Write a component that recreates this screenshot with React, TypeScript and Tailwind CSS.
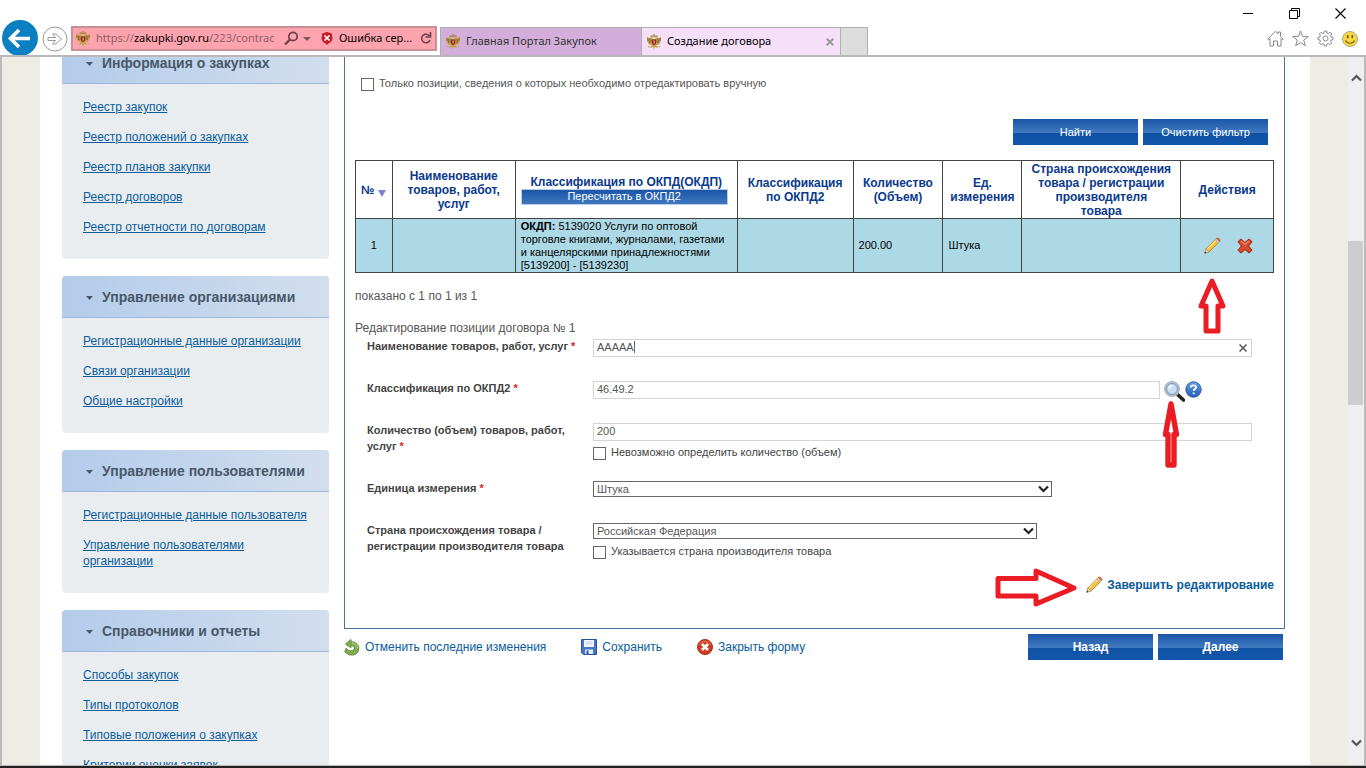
import React from "react";

const sections = [
	{
		title: "Информация о закупках",
		links: ["Реестр закупок", "Реестр положений о закупках", "Реестр планов закупки", "Реестр договоров", "Реестр отчетности по договорам"],
	},
	{
		title: "Управление организациями",
		links: ["Регистрационные данные организации", "Связи организации", "Общие настройки"],
	},
	{
		title: "Управление пользователями",
		links: ["Регистрационные данные пользователя", "Управление пользователями организации"],
	},
	{
		title: "Справочники и отчеты",
		links: ["Способы закупок", "Типы протоколов", "Типовые положения о закупках", "Критерии оценки заявок"],
	},
];

const Eagle: React.FC = () => (
	<svg width="16" height="16" viewBox="0 0 16 16" className="shrink-0">
		<path d="M7 5 5.6 3.2 3 4 1.2 2.6 1 6l1 3 1.6 1.8L6 11l-2.4 2.6 1.8.2 1.6-1.3L8 15.5l1-3 1.6 1.3 1.8-.2L10 11l2.4-.2L14 9l1-3-.2-3.4L13 4l-2.6-.8L9 5z" fill="#c0a04a" />
		<path d="M2 4v3M3.6 5v4M5 5v4M14 4v3M12.4 5v4M11 5v4" stroke="#6b5c28" strokeWidth=".7" />
		<path d="M4.2 2.4 6 1.6 7 3.4M11.8 2.4 10 1.6 9 3.4M7 1.3 8 .5l1 .8-.4 1.2H7.4z" fill="#d2a83a" stroke="#86702e" strokeWidth=".6" />
		<path d="M6 5.5h4v4L8 11.2 6 9.5z" fill="#a51d1d" />
		<path d="M7.600 6.500h1v3h-1z" fill="#e9cfa0" />
		<circle cx="2.600" cy="12.600" r=".9" fill="#c9b25a" />
		<circle cx="13.300" cy="12.600" r=".9" fill="#c9b25a" />
	</svg>
);

const Pencil: React.FC = () => (
	<svg width="17" height="17" viewBox="0 0 17 17">
		<path d="m.8 16.200 1.200-4.400L11.500 2.200l3.300 3.200-9.600 9.400z" fill="#f3bd3e" stroke="#a67822" strokeWidth=".8" />
		<path d="M3.200 12 12 3.200" stroke="#fbe08a" strokeWidth="1.300" />
		<path d="m.8 16.200 1.200-4.400 3.200 3z" fill="#f3dfc0" stroke="#a98a5c" strokeWidth=".7" />
		<path d="m.6 16.400.5-1.900 1.400 1.400z" fill="#333" />
		<path d="m11 2.800 1.300-1.300 3.300 3.200L14.300 6z" fill="#d7d7d7" stroke="#9a9a9a" strokeWidth=".5" />
		<path d="M12.300 1.500c1.600-1.700 5 1.300 3.300 3.200z" fill="#dd6a42" stroke="#b75233" strokeWidth=".6" />
	</svg>
);

const Chevron: React.FC<{ className?: string }> = ({ className }) => (
	<svg width="11" height="8" viewBox="0 0 11 8" className={className} fill="none">
		<path d="m1 1.500 4.500 4.500L10 1.500" stroke="currentColor" strokeWidth="2.200" />
	</svg>
);

const BlueButton: React.FC<{ label: string; size?: string }> = ({ label, size = "text-[12px] font-bold" }) => (
	<button
		type="button"
		className={`h-[26px] w-[125px] bg-[linear-gradient(#1a55a7_0%,#4079bf_52%,#0f52a5_53%,#1256ab_100%)] text-white ${size}`}
	>
		{label}
	</button>
);

const CheckField: React.FC<{ id: string; label: string }> = ({ id, label }) => (
	<div className="flex items-start gap-[5px] text-[11px]">
		<input id={id} type="checkbox" className="size-[13px] shrink-0 appearance-none border border-[#666] bg-white checked:bg-[#666]" />
		<label htmlFor={id} className="leading-[10px]">{label}</label>
	</div>
);

const FormRow: React.FC<{ id: string; label: string; required?: boolean; tall?: boolean; children: React.ReactNode }> = ({ id, label, required, tall, children }) => (
	<div className={`flex ${tall ? "min-h-[58px]" : "min-h-[42px]"}`}>
		<label htmlFor={id} className="w-[226px] shrink-0 pr-3 text-[11px] leading-4 font-bold text-[#444]">
			{label} {required && <span className="text-[#d22]">*</span>}
		</label>
		<div className="min-w-0 flex-1 pt-px">{children}</div>
	</div>
);

const SelectField: React.FC<{ id: string; value: string; width: string }> = ({ id, value, width }) => (
	<div className={`relative max-w-full ${width}`}>
		<select id={id} className="block h-4 w-full appearance-none border border-[#666] bg-white px-[3px] text-[11px] leading-[14px] text-[#555]">
			<option>{value}</option>
		</select>
		<Chevron className="pointer-events-none absolute top-1 right-[3px] text-[#222]" />
	</div>
);

const textInput = "block h-[18px] w-full border border-[#d4d4d4] bg-white px-[3px] pb-[3px] text-[11px] text-[#555] outline-none";

const BrowserBar: React.FC = () => (
	<header className="flex h-[57px] shrink-0 items-end justify-between border-b-2 border-[#b9b9b9] bg-white font-['Noto_Sans',sans-serif] text-[11px]">
		<div className="flex items-end">
			<button type="button" aria-label="Назад" className="ml-0.5">
				<svg width="38" height="35" viewBox="0 0 38 35">
					<circle cx="18" cy="18" r="18" fill="#0a80c2" />
					<path d="M28 18.500H9.500M17 10l-8.500 8.500L17 27" fill="none" stroke="#fff" strokeWidth="3.600" />
				</svg>
			</button>
			<button type="button" aria-label="Вперед" className="mb-[3px] ml-0.5">
				<svg width="26" height="26" viewBox="0 0 26 26" fill="none" stroke="#999">
					<circle cx="13" cy="13" r="12" />
					<path d="M6 11.500h7.500L10.500 8H14l5.500 5-5.500 5h-3.500l3-3.500H6z" />
				</svg>
			</button>
			<div className="mb-1 ml-[3px] flex h-[25px] w-[366px] items-center border-2 border-[#c98f96] bg-[#ffa3af] pl-0.5">
				<Eagle />
				<span className="ml-[5px] w-[186px] overflow-hidden whitespace-nowrap text-[#8a6267]">
					https://<span className="text-black">zakupki.gov.ru</span>/223/contrac
				</span>
				<svg width="15" height="15" viewBox="0 0 15 15" className="ml-0.5 shrink-0" fill="none" stroke="#6b4247" strokeWidth="1.800">
					<circle cx="9" cy="5.500" r="4.200" />
					<path d="m6 8.500-5 5" strokeWidth="2.400" />
				</svg>
				<svg width="8" height="4" viewBox="0 0 8 4" className="ml-1 shrink-0"><path d="M0 0h8L4 4z" fill="#7a5459" /></svg>
				<svg width="12" height="13" viewBox="0 0 12 13" className="ml-[10px] shrink-0">
					<path d="M1 1.500 6 0l5 1.500v6L6 13 1 7.500z" fill="#c61f2b" />
					<circle cx="6" cy="6" r="5.500" fill="#c61f2b" />
					<path d="m3.500 3.500 5 5m0-5-5 5" stroke="#fff" strokeWidth="1.700" />
				</svg>
				<span className="ml-1.5 whitespace-nowrap text-black">Ошибка сер...</span>
				<svg width="12" height="13" viewBox="0 0 12 13" className="mr-[3px] ml-auto shrink-0" fill="none" stroke="#6b4247" strokeWidth="1.600">
					<path d="M9.500 4A4.300 4.300 0 1 0 10 8" />
					<path d="M10.500 0v5h-5" />
				</svg>
			</div>
			<div className="ml-[3px] flex h-7 border border-[#b0b0b0] border-b-0">
				<div className="flex w-[200px] items-center gap-[5px] bg-[#d3aedb] pl-1 text-[#333]">
					<Eagle />Главная Портал Закупок
				</div>
				<div className="flex w-[200px] items-center gap-[5px] border-x border-[#b0b0b0] bg-[#f5dff9] pl-1 text-black">
					<Eagle />Создание договора
					<button type="button" aria-label="Закрыть вкладку" className="mr-1.5 ml-auto">
						<svg width="8" height="8" viewBox="0 0 8 8"><path d="m.7.7 6.600 6.600m0-6.600L.7 7.300" stroke="#999" strokeWidth="2" /></svg>
					</button>
				</div>
				<div className="w-[26px] bg-[#dcdcdc]" />
			</div>
		</div>
		<div className="flex h-[55px] flex-col items-end justify-between pt-2 pb-2">
			<div className="flex items-center gap-[35px] pr-5">
				<button type="button" aria-label="Свернуть">
					<svg width="11" height="11" viewBox="0 0 11 11"><path d="M0 5.500h10" stroke="#000" /></svg>
				</button>
				<button type="button" aria-label="Восстановить">
					<svg width="11" height="11" viewBox="0 0 11 11" fill="none" stroke="#000"><path d="M.5 2.500h8v8h-8zM2.500 2.500v-2h8v8h-2" /></svg>
				</button>
				<button type="button" aria-label="Закрыть">
					<svg width="11" height="11" viewBox="0 0 11 11"><path d="m.5.5 10 10m0-10-10 10" stroke="#000" strokeWidth="1.100" /></svg>
				</button>
			</div>
			<div className="flex items-center gap-2 pr-2">
				<svg width="17" height="17" viewBox="0 0 17 17" fill="none" stroke="#888">
					<path d="M.8 9.200 8.500 1.200l2.500 2.600V2h2.500v4.300l2.700 2.900-1 .8-1.200-1.200v7.200h-3.500v-5h-4v5H3V8.800L1.800 10z" />
				</svg>
				<svg width="17" height="17" viewBox="0 0 17 17" fill="none" stroke="#888">
					<path d="m8.500.9 2 5.400 5.800.2-4.600 3.600 1.600 5.600-4.800-3.200-4.800 3.200 1.600-5.600L.7 6.500l5.800-.2z" />
				</svg>
				<svg width="17" height="17" viewBox="0 0 17 17" fill="none" stroke="#888">
					<path d="M7.300 1h2.400l.4 2 1.200.5L13 2.300 14.700 4l-1.200 1.700.5 1.200 2 .4v2.400l-2 .4-.5 1.200 1.200 1.700-1.700 1.700-1.700-1.200-1.200.5-.4 2H7.300l-.4-2-1.200-.5L4 14.700 2.300 13l1.200-1.700-.5-1.200-2-.4V7.300l2-.4.5-1.200L2.300 4 4 2.300l1.700 1.200L6.900 3z" />
					<circle cx="8.500" cy="8.500" r="2.500" />
				</svg>
				<svg width="16" height="16" viewBox="0 0 16 16">
					<circle cx="8" cy="8" r="7.500" fill="#fbd63e" stroke="#a9a68c" />
					<path d="M5.700 4v3.200M10.300 4v3.200" stroke="#76601c" strokeWidth="1.700" />
					<path d="M3.500 9.500c1.500 3.600 7.500 3.600 9 0" fill="none" stroke="#76601c" strokeWidth="1.100" />
				</svg>
			</div>
		</div>
	</header>
);

const Sidebar: React.FC = () => (
	<nav className="-mt-[15px] flex w-[267px] shrink-0 flex-col gap-[17px]">
		{sections.map((s) => (
			<section key={s.title} className="overflow-hidden rounded-[4px] bg-[#e9edf0]">
				<h2 className="flex h-[42px] items-center gap-[9px] border-b border-[#9db8dc] bg-linear-to-r from-[#b3ccea] to-[#d2deee] pt-0.5 pl-6 text-[14px] font-bold text-[#48586a]">
					<svg width="7" height="4" viewBox="0 0 7 4"><path d="M0 0h7L3.500 4z" fill="#48586a" /></svg>
					{s.title}
				</h2>
				<ul className="flex flex-col gap-[14px] pt-[15px] pr-4 pb-6 pl-[21px] text-[12px] leading-4">
					{s.links.map((l) => (
						<li key={l}><a href="#" className="text-[#0a5c9c] underline">{l}</a></li>
					))}
				</ul>
			</section>
		))}
	</nav>
);

const cell = "border border-[#444] px-[5px] py-0";

const PositionsTable: React.FC = () => (
	<table className="mt-[15px] w-full table-fixed border-collapse border border-[#777]">
		<colgroup>
			<col className="w-[4%]" />
			<col className="w-[13.4%]" />
			<col className="w-[24.2%]" />
			<col className="w-[12.6%]" />
			<col className="w-[9.8%]" />
			<col className="w-[8.6%]" />
			<col className="w-[17.3%]" />
			<col />
		</colgroup>
		<thead>
			<tr className="h-[58px] text-[12px] leading-[14px] text-[#0a3a8c]">
				<th className={cell}>
					<span className="flex items-center gap-1">
						№
						<svg width="8" height="7" viewBox="0 0 8 7" className="mt-2"><path d="M0 0h8L4 7z" fill="#7f7fd6" /></svg>
					</span>
				</th>
				<th className={cell}>Наименование товаров, работ, услуг</th>
				<th className={cell}>
					<span className="block">Классификация по ОКПД(ОКДП)</span>
					<button type="button" className="block h-4 w-[98%] border border-[#b9cbe6] bg-linear-to-b from-[#1a55a7] to-[#3f77be] text-[11px] leading-[13px] font-normal text-white">
						Пересчитать в ОКПД2
					</button>
				</th>
				<th className={cell}>Классификация по ОКПД2</th>
				<th className={cell}>Количество (Объем)</th>
				<th className={cell}>Ед. измерения</th>
				<th className={cell}>
					Страна происхождения товара / регистрации производителя
					<br />
					товара
				</th>
				<th className={cell}>Действия</th>
			</tr>
		</thead>
		<tbody>
			<tr className="h-[54px] bg-[#add8e6] text-[11px] leading-[13px] text-black">
				<td className={`${cell} text-center`}>1</td>
				<td className={cell} />
				<td className={cell}>
					<b>ОКДП:</b> 5139020 Услуги по оптовой торговле книгами, журналами, газетами и канцелярскими принадлежностями [5139200] - [5139230]
				</td>
				<td className={cell} />
				<td className={cell}>200.00</td>
				<td className={cell}>Штука</td>
				<td className={cell} />
				<td className={cell}>
					<div className="flex items-center gap-4 pl-[18px]">
						<div className="relative">
							<button type="button" aria-label="Редактировать" className="block"><Pencil /></button>
							<svg width="32" height="58" viewBox="0 0 32 58" className="pointer-events-none absolute top-[40px] -left-2">
								<path d="M16 4 27 29h-5v25H10V29H5z" fill="#fff" stroke="#ea1c24" strokeWidth="5" strokeLinejoin="round" />
							</svg>
						</div>
						<button type="button" aria-label="Удалить">
							<svg width="16" height="16" viewBox="0 0 16 16">
								<path d="M4 1.200 8 4.600l4-3.400L14.900 4 11.500 8l3.400 4-2.900 2.800-4-3.400-4 3.400L1.100 12l3.400-4L1.100 4z" fill="#da4a2d" stroke="#ad2c1b" strokeWidth="1.100" strokeLinejoin="round" />
								<path d="M4 3 8 6.300 12 3" fill="none" stroke="#ef8a6b" strokeWidth="1.300" />
							</svg>
						</button>
					</div>
				</td>
			</tr>
		</tbody>
	</table>
);

const EditForm: React.FC = () => (
	<form className="mt-0.5 pr-[22px] pl-3 text-[#444]">
		<FormRow id="name" label="Наименование товаров, работ, услуг" required>
			<div className="relative">
				<input id="name" defaultValue="ААААА" className={textInput} />
				<span className="absolute top-0.5 left-[41px] h-3 w-px bg-[#666]" />
				<svg width="8" height="8" viewBox="0 0 8 8" className="absolute top-[5px] right-[5px]">
					<path d="m.5.5 7 7m0-7-7 7" stroke="#555" strokeWidth="1.500" />
				</svg>
			</div>
		</FormRow>
		<FormRow id="okpd" label="Классификация по ОКПД2" required>
			<div className="flex">
				<div className="w-[86%] shrink-0"><input id="okpd" defaultValue="46.49.2" className={textInput} /></div>
				<div className="relative ml-1">
					<button type="button" aria-label="Найти код" className="block">
						<svg width="21" height="21" viewBox="0 0 21 21">
							<path d="m13 13 6.500 6" stroke="#222" strokeWidth="3.600" strokeLinecap="round" />
							<circle cx="8" cy="8" r="7" fill="#c9def3" stroke="#b4bac2" strokeWidth="2" />
							<circle cx="8" cy="8" r="5.500" fill="none" stroke="#6f93bd" />
							<path d="M5 8c0-2 1.500-3.200 3.500-3.200" fill="none" stroke="#fff" strokeWidth="1.400" />
						</svg>
					</button>
					<svg width="20" height="70" viewBox="0 0 20 70" className="pointer-events-none absolute top-5 -left-[3px]">
						<path d="M10 3 15.500 33.500H13V64H7V33.500H4.500z" fill="#fff" stroke="#ea1c24" strokeWidth="5.400" strokeLinejoin="round" />
					</svg>
				</div>
				<button type="button" aria-label="Справка" className="mb-auto">
					<svg width="17" height="17" viewBox="0 0 17 17">
						<defs>
							<linearGradient id="help" x1="0" y1="0" x2="0" y2="1">
								<stop offset="0" stopColor="#6ea0e6" />
								<stop offset="1" stopColor="#1f5cb4" />
							</linearGradient>
						</defs>
						<circle cx="8.500" cy="8.500" r="7.700" fill="url(#help)" stroke="#2a5da8" />
						<path d="M6 6.600c0-3 5-3 5-.2 0 1.600-2.300 1.600-2.300 3.600M8.700 11.400v1.800" fill="none" stroke="#fff" strokeWidth="1.800" />
					</svg>
				</button>
			</div>
		</FormRow>
		<FormRow id="amount" label="Количество (объем) товаров, работ, услуг" required tall>
			<input id="amount" defaultValue="200" className={`${textInput} mb-1.5`} />
			<CheckField id="no-amount" label="Невозможно определить количество (объем)" />
		</FormRow>
		<FormRow id="unit" label="Единица измерения" required>
			<SelectField id="unit" value="Штука" width="w-[459px]" />
		</FormRow>
		<FormRow id="country" label="Страна происхождения товара / регистрации производителя товара">
			<div className="flex flex-col gap-[7px]">
				<SelectField id="country" value="Российская Федерация" width="w-[444px]" />
				<CheckField id="maker" label="Указывается страна производителя товара" />
			</div>
		</FormRow>
	</form>
);

const Scrollbar: React.FC = () => (
	<div className="flex w-4 shrink-0 flex-col items-center bg-[#efefef] pt-[17px] pb-[18px] text-[#555]">
		<Chevron className="rotate-180" />
		<div className="flex w-full flex-1 flex-col">
			<div className="grow-[159]" />
			<div className="w-[15px] grow-[164] bg-[#cdcdcd]" />
			<div className="grow-[335]" />
		</div>
		<Chevron />
	</div>
);

const App: React.FC = () => {
	return (
		<div className="flex h-screen flex-col overflow-hidden bg-white font-['Liberation_Sans',Arial,sans-serif]">
			<BrowserBar />
			<div className="flex min-h-0 flex-1 overflow-hidden border-x-2 border-b border-[#b9b9b9] bg-[#edede5]">
				<div className="ml-[38px] flex min-w-0 flex-1 items-start gap-[15px] overflow-hidden bg-white pr-[25px] pl-[22px]">
					<Sidebar />
					<main className="min-w-0 flex-1 text-[12px] leading-4 text-[#555]">
						<div className="border border-t-0 border-[#4a7296] px-2.5 pt-[21px] pb-[35px]">
							<div className="pl-1.5">
								<CheckField id="manual" label="Только позиции, сведения о которых необходимо отредактировать вручную" />
							</div>
							<div className="mt-7 flex justify-end gap-[5px] pr-1.5">
								<BlueButton label="Найти" size="text-[11px]" />
								<BlueButton label="Очистить фильтр" size="text-[11px]" />
							</div>
							<PositionsTable />
							<p className="mt-[15px]">показано с 1 по 1 из 1</p>
							<p className="mt-4">Редактирование позиции договора № 1</p>
							<EditForm />
							<div className="mt-3 flex justify-end">
								<a href="#" className="relative flex items-center gap-1 font-bold text-[#0a5c9c]">
									<Pencil />
									Завершить редактирование
									<svg width="84" height="44" viewBox="0 0 84 44" className="pointer-events-none absolute -top-[10px] right-full mr-[7px]">
										<path d="M3 12.500h38V5l38 17-38 16v-8H3z" fill="#fff" stroke="#ea1c24" strokeWidth="5" strokeLinejoin="round" />
									</svg>
								</a>
							</div>
						</div>
						<div className="mt-[5px] flex items-center text-[#0a5c9c]">
							<a href="#" className="flex items-center gap-[5px]">
								<svg width="16" height="17" viewBox="0 0 16 17">
									<path d="M7 .5 1.500 5 7 8.800V6.500c5 .2 4 5.500 0 5.300-2.200 0-3.500-1-5-2.600L.8 13c4.500 5 13.700 4 14-3.500C15 4.800 11 2.700 7 2.700z" fill="#82ad4f" stroke="#557c33" strokeWidth=".8" />
									<path d="M8 4c3.500.3 5.500 2.300 5.500 5" fill="none" stroke="#bcd894" />
								</svg>
								Отменить последние изменения
							</a>
							<a href="#" className="ml-[35px] flex items-center gap-[5px]">
								<svg width="16" height="16" viewBox="0 0 16 16">
									<path d="M.5.5h15v15H2.500l-2-2z" fill="#4674c8" stroke="#2c519b" />
									<path d="M3 1h10v7H3z" fill="#f3f7fd" />
									<path d="M4.500 3h7M4.500 5h7" stroke="#bccde6" />
									<path d="M4 10.500h8V15H4z" fill="#e4eaf4" />
									<path d="M5.500 11.500h2V15h-2z" fill="#2c519b" />
								</svg>
								Сохранить
							</a>
							<a href="#" className="ml-[35px] flex items-center gap-[5px]">
								<svg width="16" height="16" viewBox="0 0 16 16">
									<circle cx="8" cy="8" r="7.500" fill="#cf3a24" stroke="#a82a18" />
									<path d="M2.500 6c1.500-5 9.500-5 11 0" fill="none" stroke="#e7836c" />
									<path d="m5 5 6 6m0-6-6 6" stroke="#fff" strokeWidth="2.800" />
								</svg>
								Закрыть форму
							</a>
							<div className="mr-0.5 ml-auto flex gap-[5px]">
								<BlueButton label="Назад" />
								<BlueButton label="Далее" />
							</div>
						</div>
					</main>
				</div>
				<div className="w-[38px] shrink-0" />
				<Scrollbar />
			</div>
			<div className="h-0.5 shrink-0 bg-[#222]" />
		</div>
	);
};

export default App;
